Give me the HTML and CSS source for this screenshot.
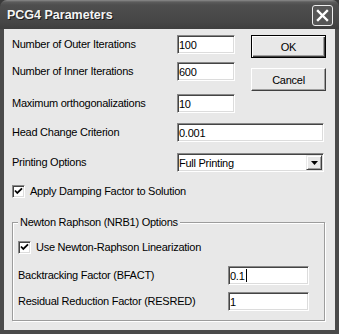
FILE: index.html
```html
<!doctype html>
<html lang="en">
<head>
<meta charset="utf-8">
<title>PCG4 Parameters</title>
<link rel="stylesheet" href="styles.css">
</head>
<body>

	<div class="window">

		<div class="titlebar">
			<span class="title">PCG4 Parameters</span>
			<span class="close"><svg width="19" height="19" viewBox="0 0 19 19"><path d="M5 5 L14 14 M14 5 L5 14" stroke="#fff" stroke-width="2.4" stroke-linecap="square"/></svg></span>
		</div>

		<div class="client">

			<div class="top">
				<div class="fields">
					<div class="row"><span class="lbl">Number of Outer Iterations</span><span class="edit short">100</span></div>
					<div class="row r2"><span class="lbl">Number of Inner Iterations</span><span class="edit short">600</span></div>
					<div class="row r3"><span class="lbl">Maximum orthogonalizations</span><span class="edit short">10</span></div>
				</div>
				<div class="buttons">
					<span class="btn default">OK</span>
					<span class="btn cancel">Cancel</span>
				</div>
			</div>

			<div class="row r4"><span class="lbl">Head Change Criterion</span><span class="edit wide">0.001</span></div>

			<div class="row r5"><span class="lbl">Printing Options</span>
				<span class="edit wide combo">Full Printing
					<span class="arrow"><svg width="7" height="4" viewBox="0 0 7 4"><path d="M0 0 H7 L3.5 4 Z" fill="#000"/></svg></span>
				</span>
			</div>

			<div class="check r6">
				<span class="box"><svg width="11" height="11" viewBox="0 0 11 11"><path d="M2 4.5 L4.3 7 L9 2.3" fill="none" stroke="#000" stroke-width="1.8"/></svg></span>
				<span>Apply Damping Factor to Solution</span>
			</div>

			<fieldset class="group">
				<legend>Newton Raphson (NRB1) Options</legend>

				<div class="check g1">
					<span class="box"><svg width="11" height="11" viewBox="0 0 11 11"><path d="M2 4.5 L4.3 7 L9 2.3" fill="none" stroke="#000" stroke-width="1.8"/></svg></span>
					<span>Use Newton-Raphson Linearization</span>
				</div>

				<div class="row g2"><span class="lbl glbl">Backtracking Factor (BFACT)</span><span class="edit mid">0.1<span class="caret"></span></span></div>
				<div class="row g3"><span class="lbl glbl">Residual Reduction Factor (RESRED)</span><span class="edit mid">1</span></div>
			</fieldset>

		</div>

	</div>

</body>
</html>
```

FILE: styles.css
```css
/* grayscale XP style dialog */

	html, body { margin: 0; height: 100%; background: #3a3a3a; }
	body { font: 11px "Liberation Sans", Arial, sans-serif; letter-spacing: -0.25px; color: #000; }

	.window { width: 339px; height: 334px; display: flex; flex-direction: column; }

	.titlebar { height: 29px; flex: none; display: flex; align-items: center; justify-content: space-between;
		padding: 0 6px 0 7px; border-radius: 7px 7px 0 0;
		background: linear-gradient( #8c8c8c 0, #5c5c5c 2px, #4e4e4e 5px, #464646 22px, #3e3e3e 29px ); }
	.title { color: #f4f4f4; font: bold 12.5px "Liberation Sans", Arial, sans-serif; letter-spacing: 0; text-shadow: 1px 1px #1a1a1a; padding-top: 1px; }
	.close { width: 21px; height: 21px; box-sizing: border-box; border: 1px solid #eee; border-radius: 3px; background: #565656; display: flex; margin-top: 1px; }

	.client { flex: 1; background: #e8e8e8; border: solid #4a4a4a; border-width: 0 4px 4px; padding: 6px 10px 0 8px; }

	.top { display: flex; }
	.buttons { display: flex; flex-direction: column; margin-left: 16px; }

	.row { display: flex; align-items: center; }
	.lbl { width: 165px; line-height: 13px; }
	.r2 { margin-top: 8px; }
	.r3 { margin-top: 13px; }
	.r4 { margin-top: 10px; }
	.r5 { margin-top: 11px; }

	.edit { box-sizing: border-box; height: 19px; background: #fff; display: flex; align-items: center; padding: 0 0 0 1px;
		border: 1px solid; border-color: #888 #fff #fff #888; box-shadow: inset 1px 1px #444, inset -1px -1px #dcdcdc; }
	.short { width: 58px; }
	.wide { width: 147px; }
	.mid { width: 81px; }
	.combo { justify-content: space-between; padding-right: 1px; }
	.caret { width: 1px; height: 13px; background: #000; margin-left: 1px; }

	.arrow { box-sizing: border-box; width: 16px; height: 15px; display: flex; align-items: center; justify-content: center; background: #e8e8e8;
		border: 1px solid; border-color: #e8e8e8 #404040 #404040 #e8e8e8; box-shadow: inset 1px 1px #fff, inset -1px -1px #a0a0a0; }

	.btn { box-sizing: border-box; width: 75px; height: 23px; display: flex; align-items: center; justify-content: center; background: #e8e8e8;
		border: 1px solid; border-color: #fff #404040 #404040 #fff; box-shadow: inset -1px -1px #a0a0a0; }
	.btn.default { border-color: #000; box-shadow: inset 1px 1px #fff, inset -1px -1px #404040, inset -2px -2px #a0a0a0; }
	.cancel { margin-top: 10px; }

	.check { display: flex; align-items: center; gap: 5px; line-height: 13px; }
	.box { box-sizing: border-box; width: 13px; height: 13px; background: #fff; display: flex;
		border: 1px solid; border-color: #888 #fff #fff #888; box-shadow: inset 1px 1px #444, inset -1px -1px #dcdcdc; }
	.r6 { margin-top: 13px; }

	.group { margin: 18px 0 0; padding: 0 5px 9px; min-width: 0; box-sizing: border-box; width: 313px;
		border: 1px solid #9c9c9c; box-shadow: 1px 1px #fff, inset 1px 1px #fff; }
	.group legend { padding: 0 2px; line-height: 13px; background: #e8e8e8; }
	.g1 { margin-top: 12px; }
	.g2 { margin-top: 12px; }
	.g3 { margin-top: 7px; }
	.glbl { width: 210px; }
```
